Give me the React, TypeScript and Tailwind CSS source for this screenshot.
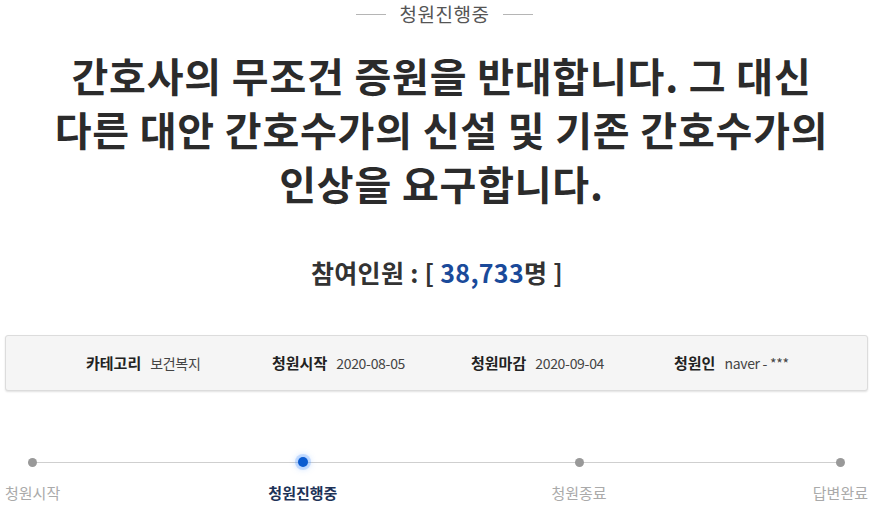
import React from 'react';

const steps = [
  { label: '청원시작', active: false },
  { label: '청원진행중', active: true },
  { label: '청원종료', active: false },
  { label: '답변완료', active: false },
];

const info = [
  { k: '카테고리', v: '보건복지', w: 'w-[186px]' },
  { k: '청원시작', v: '2020-08-05', w: 'w-[199px]' },
  { k: '청원마감', v: '2020-09-04', w: 'w-[203px]' },
  { k: '청원인', v: 'naver - ***', w: '' },
];

export default function App() {
  return (
    <div
      className="w-[889px] h-[526px] bg-white overflow-hidden text-[#333]"
      style={{ fontFamily: '"Noto Sans CJK KR", "Noto Sans", sans-serif' }}
    >
      {/* status */}
      <div className="flex items-center justify-center h-[28px]">
        <span className="w-[30px] h-px bg-[#b5b5b5]" />
        <span className="mx-[14px] text-[19px] tracking-[0.5px] text-[#555]">청원진행중</span>
        <span className="w-[30px] h-px bg-[#b5b5b5]" />
      </div>

      {/* title */}
      <h1 className="mt-[20px] pr-[6px] text-center font-bold text-[40px] leading-[54px] tracking-[0.8px] text-[#2b2b2b]">
        간호사의 무조건 증원을 반대합니다. 그 대신
        <br />
        다른 대안 간호수가의 신설 및 기존 간호수가의
        <br />
        인상을 요구합니다.
      </h1>

      {/* count */}
      <div className="mt-[46px] pr-[15px] text-center text-[25px] leading-[32px] font-bold tracking-[0.3px] text-[#333]">
        참여인원 : [ <span className="text-[#1a4a9a]">38,733</span>명 ]
      </div>

      {/* info box */}
      <div className="mt-[47px] mx-[5px] w-[863px] h-[56px] rounded-[3px] border border-[#dcdcdc] bg-[#f5f5f5] shadow-[0_1px_2px_rgba(0,0,0,0.12)] flex items-center pl-[80px]">
        {info.map((it) => (
          <div key={it.k} className={'flex items-center ' + it.w}>
            <span className="font-bold text-[15px] text-[#222]">{it.k}</span>
            <span className="ml-[9px] text-[14px] text-[#444] tracking-[-0.3px]">{it.v}</span>
          </div>
        ))}
      </div>

      {/* progress */}
      <div className="relative mt-[65px] mx-[5px] w-[863px] flex justify-between">
        <div className="absolute left-[28px] right-[28px] top-[6px] h-px bg-[#cfcfcf]" />
        {steps.map((s, i) => (
          <div
            key={s.label}
            className={
              'relative flex flex-col items-center ' +
              (i === 1 ? '-ml-[6px]' : i === 2 ? 'mr-[-8px]' : '')
            }
          >
            <div className="h-[12px] flex items-center justify-center">
              {s.active ? (
                <span className="w-[10px] h-[10px] rounded-full bg-[#0a5bd0] shadow-[0_0_0_3px_rgba(80,150,255,0.25),0_0_6px_2px_rgba(80,150,255,0.35)]" />
              ) : (
                <span className="w-[9px] h-[9px] rounded-full bg-[#999]" />
              )}
            </div>
            <span
              className={
                'mt-[15px] text-[15px] leading-[20px] ' +
                (s.active ? 'font-bold text-[#1d3257]' : 'text-[#aaa]')
              }
            >
              {s.label}
            </span>
          </div>
        ))}
      </div>
    </div>
  );
}
